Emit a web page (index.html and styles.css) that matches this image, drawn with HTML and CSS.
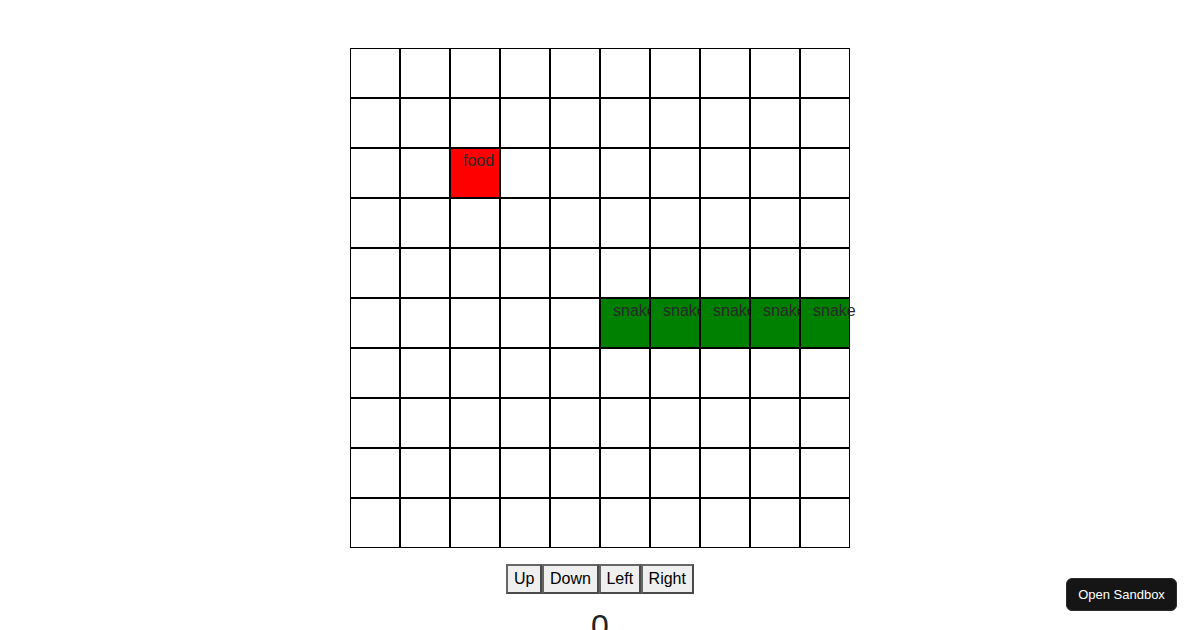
FILE: index.html
```html
<!DOCTYPE html>
<html>
<head>
<meta charset="utf-8">
<link rel="stylesheet" href="styles.css">
</head>
<body>
<div class="app">
  <div class="board" id="board"></div>
  <div class="controls">
    <button class="btn">Up</button>
    <button class="btn">Down</button>
    <button class="btn">Left</button>
    <button class="btn">Right</button>
  </div>
  <div class="score">0</div>
</div>
<a class="sandbox">Open Sandbox</a>
<script src="script.js"></script>
</body>
</html>
```
FILE: styles.css
```css
html, body {
  margin: 0;
  padding: 0;
  background: #fff;
  font-family: "Liberation Sans", Arial, sans-serif;
  overflow: hidden;
}
.app {
  display: flex;
  flex-direction: column;
  align-items: center;
  padding-top: 48px;
}
.board {
  display: grid;
  grid-template-columns: repeat(10, 50px);
  grid-template-rows: repeat(10, 50px);
  width: 500px;
}
.cell {
  box-sizing: border-box;
  width: 50px;
  height: 50px;
  border: 1px solid #000;
  padding: 3px 12px 0;
  font-size: 16px;
  line-height: 18px;
  color: #2a2a2a;
  white-space: nowrap;
  overflow: visible;
  background: #fff;
}
.cell.food { background: #ff0000; }
.cell.snake { background: #008000; }
.controls {
  display: flex;
  margin-top: 16px;
  gap: 0;
}
.btn {
  font-family: "Liberation Sans", Arial, sans-serif;
  font-size: 16px;
  line-height: 18px;
  padding: 4px 5.75px;
  margin: 0;
  background: #efefef;
  color: #000;
  border: 2px solid #4a4a4a;
  border-top-color: #666;
  border-left-color: #666;
  border-radius: 0;
}
.score {
  margin-top: 14px;
  font-size: 32px;
  line-height: 37px;
  color: #222;
}
.sandbox {
  position: fixed;
  right: 23px;
  bottom: 19px;
  width: 111px;
  height: 33px;
  box-sizing: border-box;
  display: flex;
  align-items: center;
  justify-content: center;
  background: #151515;
  color: #fff;
  font-size: 13px;
  border-radius: 6px;
  border: 1px solid #2a2a2a;
}
```
FILE: script.js
```js
var board = document.getElementById('board');
for (var r = 0; r < 10; r++) {
  for (var c = 0; c < 10; c++) {
    var d = document.createElement('div');
    d.className = 'cell';
    if (r === 2 && c === 2) { d.className += ' food'; d.textContent = 'food'; }
    if (r === 5 && c >= 5) { d.className += ' snake'; d.textContent = 'snake'; }
    board.appendChild(d);
  }
}
```
